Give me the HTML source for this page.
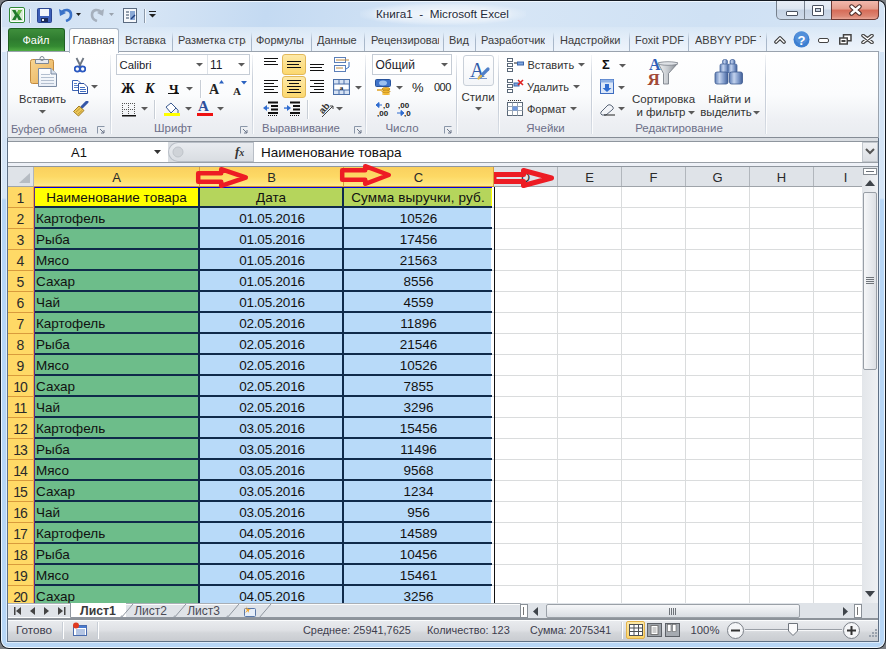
<!DOCTYPE html><html><head><meta charset="utf-8"><style>
*{margin:0;padding:0;box-sizing:border-box}
html,body{width:886px;height:649px;overflow:hidden;background:#7a7d82}
body{position:relative;font-family:"Liberation Sans",sans-serif;}
div{position:absolute}
.t{white-space:pre;line-height:1;}
</style></head><body><div style="left:0px;top:0px;width:886px;height:649px;background:#141a22;border-radius:8px 8px 9px 9px"></div><div style="left:1px;top:1px;width:884px;height:647px;background:#eef6fe;border-radius:7px 7px 8px 8px;"></div><div style="left:2px;top:2px;width:882px;height:645px;background:linear-gradient(#d3e3f5 0px,#d6e6f7 196px,#b7d6f6 198px,#b7d6f6 100%);border-radius:6px 6px 7px 7px;"></div><div style="left:2px;top:2px;width:882px;height:26px;background:linear-gradient(100deg,#cfe0f3 0%,#d8e6f5 15%,#c4daf2 30%,#d7e6f6 55%,#cfe1f4 80%,#d5e4f5 100%);border-radius:6px 6px 0 0;"></div><div style="left:2px;top:27px;width:882px;height:25px;background:linear-gradient(#d8e7f6,#e6eff9 55%,#eef4fb)"></div><div style="left:6px;top:51px;width:874px;height:592px;background:#dcecfc"></div><div style="left:7px;top:51px;width:872px;height:591px;background:#5f7085"></div><svg style="position:absolute;left:9px;top:7px;" width="17" height="17" viewBox="0 0 17 17"><rect x="0.5" y="0.5" width="15" height="15" rx="1.5" fill="#fff" stroke="#2f8a37"/>
<rect x="2" y="2" width="12" height="12" fill="#d8ecd4"/>
<path d="M3 3H6.5L8 6L9.5 3H13L10 8L13 13H9.5L8 10L6.5 13H3L6 8Z" fill="#1f7a2c"/>
<path d="M8 6L9.5 3H13L10 8Z" fill="#6cc04a"/></svg><div style="left:29px;top:9px;width:1px;height:14px;background:#8c9aab"></div><div style="left:30px;top:9px;width:1px;height:14px;background:#f4f8fc"></div><svg style="position:absolute;left:37px;top:8px;" width="15" height="15" viewBox="0 0 15 15"><rect x="0.5" y="0.5" width="14" height="14" rx="1" fill="#3d5fb8" stroke="#2a4590"/>
<rect x="3" y="1" width="9" height="7" fill="#f2f5fa"/>
<rect x="4" y="10" width="7" height="4" fill="#1c2a55"/><rect x="5" y="11" width="2" height="2" fill="#e8eef8"/></svg><svg style="position:absolute;left:59px;top:7px;" width="14" height="15" viewBox="0 0 14 15"><path d="M3 5C6 2 12 2 12 8C12 11 10 13 7 14" stroke="#3a72c8" stroke-width="2.6" fill="none"/>
<path d="M0 2L1 9L7 6Z" fill="#3a72c8"/></svg><svg style="position:absolute;left:76px;top:13px;" width="6" height="4" viewBox="0 0 6 4"><path d="M0 0H5L2.5 3Z" fill="#222"/></svg><svg style="position:absolute;left:90px;top:7px;" width="14" height="15" viewBox="0 0 14 15"><path d="M11 5C8 2 2 2 2 8C2 11 4 13 7 14" stroke="#a6b0bd" stroke-width="2.6" fill="none"/>
<path d="M14 2L13 9L7 6Z" fill="#a6b0bd"/></svg><svg style="position:absolute;left:109px;top:13px;" width="6" height="4" viewBox="0 0 6 4"><path d="M0 0H5L2.5 3Z" fill="#9aa3ae"/></svg><svg style="position:absolute;left:123px;top:8px;" width="15" height="15" viewBox="0 0 15 15"><rect x="0.5" y="0.5" width="13" height="14" fill="#f6f8fb" stroke="#5a6a80"/>
<path d="M3 4H6M3 7H6M3 10H6" stroke="#33465e"/><rect x="7" y="3" width="5" height="9" fill="#8aa9d6"/>
<path d="M8 11L12 7" stroke="#1f3f80" stroke-width="1.4"/></svg><div style="left:144px;top:9px;width:1px;height:14px;background:#8c9aab"></div><div style="left:145px;top:9px;width:1px;height:14px;background:#f4f8fc"></div><div style="left:149px;top:11px;width:7px;height:1px;background:#222"></div><svg style="position:absolute;left:149px;top:14px;" width="7" height="4" viewBox="0 0 7 4"><path d="M0 0H7L3.5 3.5Z" fill="#222"/></svg><div style="left:360px;top:3px;width:166px;height:22px;background:radial-gradient(ellipse at center,rgba(255,255,255,0.75) 0%,rgba(255,255,255,0.35) 55%,rgba(255,255,255,0) 75%)"></div><div class="t" style="left:342.5px;width:200px;text-align:center;top:7.6px;font-size:11.7px;color:#1e2a3a;text-shadow:0 0 6px #fff,0 0 3px #fff">Книга1  -  Microsoft Excel</div><div style="left:776px;top:1px;width:103px;height:19px;background:linear-gradient(#e8eef6 0%,#dde6f1 45%,#c5d3e4 50%,#cfdbea 100%);border:1px solid #76808c;border-top:none;border-radius:0 0 5px 5px"></div><div style="left:831px;top:1px;width:48px;height:19px;background:linear-gradient(#f2b9ad 0%,#e49c8b 45%,#d66b57 50%,#dc8674 85%,#eaa898 100%);border:1px solid #6e3a34;border-top:none;border-radius:0 0 5px 0"></div><div style="left:804px;top:1px;width:1px;height:18px;background:#76808c"></div><div style="left:786px;top:11px;width:12px;height:5px;background:#fff;border:1px solid #4a5260;border-radius:1px"></div><div style="left:812px;top:5px;width:12px;height:11px;background:#fff;border:1px solid #4a5260;border-radius:1px"></div><div style="left:815px;top:8px;width:6px;height:4px;background:#c8d3e0;border:1px solid #4a5260"></div><svg style="position:absolute;left:849px;top:4px;" width="13" height="12" viewBox="0 0 13 12"><path d="M2.5 2.5L10.5 9.5M10.5 2.5L2.5 9.5" stroke="#4a2a26" stroke-width="4.4" stroke-linecap="round"/><path d="M2.5 2.5L10.5 9.5M10.5 2.5L2.5 9.5" stroke="#fff" stroke-width="2.4" stroke-linecap="round"/></svg><div style="left:8px;top:28px;width:57px;height:24px;background:linear-gradient(#3f8f3c 0%,#2e7b2f 45%,#348a32 75%,#56b347 100%);border:1px solid #1f5f22;border-bottom:none;border-radius:3px 3px 0 0"></div><div class="t" style="left:-64px;width:200px;text-align:center;top:35.2px;font-size:11px;color:#fff;">Файл</div><div style="left:69px;top:28px;width:50px;height:25px;background:linear-gradient(#fdfefe,#ffffff);border:1px solid #a9b6c6;border-bottom:none;border-radius:3px 3px 0 0;z-index:3"></div><div class="t" style="left:-6.5px;width:200px;text-align:center;top:35.2px;font-size:11px;color:#3c3c3c;z-index:4">Главная</div><div class="t" style="left:125px;top:35.2px;font-size:11px;color:#3c3c3c;width:45px;overflow:hidden">Вставка</div><div style="left:172px;top:32px;width:1px;height:19px;background:linear-gradient(rgba(160,175,195,0),#a9b8ca 40%,#a9b8ca)"></div><div class="t" style="left:178px;top:35.2px;font-size:11px;color:#3c3c3c;width:68px;overflow:hidden">Разметка страницы</div><div style="left:251px;top:32px;width:1px;height:19px;background:linear-gradient(rgba(160,175,195,0),#a9b8ca 40%,#a9b8ca)"></div><div class="t" style="left:256px;top:35.2px;font-size:11px;color:#3c3c3c;width:53px;overflow:hidden">Формулы</div><div style="left:311px;top:32px;width:1px;height:19px;background:linear-gradient(rgba(160,175,195,0),#a9b8ca 40%,#a9b8ca)"></div><div class="t" style="left:317px;top:35.2px;font-size:11px;color:#3c3c3c;width:45px;overflow:hidden">Данные</div><div style="left:364px;top:32px;width:1px;height:19px;background:linear-gradient(rgba(160,175,195,0),#a9b8ca 40%,#a9b8ca)"></div><div class="t" style="left:371px;top:35.2px;font-size:11px;color:#3c3c3c;width:68px;overflow:hidden">Рецензирование</div><div style="left:443px;top:32px;width:1px;height:19px;background:linear-gradient(rgba(160,175,195,0),#a9b8ca 40%,#a9b8ca)"></div><div class="t" style="left:449px;top:35.2px;font-size:11px;color:#3c3c3c;width:24px;overflow:hidden">Вид</div><div style="left:475px;top:32px;width:1px;height:19px;background:linear-gradient(rgba(160,175,195,0),#a9b8ca 40%,#a9b8ca)"></div><div class="t" style="left:481px;top:35.2px;font-size:11px;color:#3c3c3c;width:64px;overflow:hidden">Разработчик</div><div style="left:553px;top:32px;width:1px;height:19px;background:linear-gradient(rgba(160,175,195,0),#a9b8ca 40%,#a9b8ca)"></div><div class="t" style="left:560px;top:35.2px;font-size:11px;color:#3c3c3c;width:67px;overflow:hidden">Надстройки</div><div style="left:629px;top:32px;width:1px;height:19px;background:linear-gradient(rgba(160,175,195,0),#a9b8ca 40%,#a9b8ca)"></div><div class="t" style="left:635px;top:35.2px;font-size:11px;color:#3c3c3c;width:51px;overflow:hidden">Foxit PDF</div><div style="left:688px;top:32px;width:1px;height:19px;background:linear-gradient(rgba(160,175,195,0),#a9b8ca 40%,#a9b8ca)"></div><div class="t" style="left:695px;top:35.2px;font-size:11px;color:#3c3c3c;width:66px;overflow:hidden">ABBYY PDF Transformer</div><div style="left:766px;top:32px;width:1px;height:19px;background:linear-gradient(rgba(160,175,195,0),#a9b8ca 40%,#a9b8ca)"></div><svg style="position:absolute;left:774px;top:35px;" width="12" height="9" viewBox="0 0 12 9"><path d="M2 7L6 3L10 7" stroke="#3a3a3a" stroke-width="3.6" fill="none" stroke-linejoin="round" stroke-linecap="round"/><path d="M2 7L6 3L10 7" stroke="#fff" stroke-width="1.4" fill="none" stroke-linecap="round"/></svg><svg style="position:absolute;left:793px;top:31px;" width="17" height="17" viewBox="0 0 17 17"><circle cx="8.5" cy="8.5" r="8" fill="#3d7fd1"/><circle cx="8.5" cy="6.5" r="6.5" fill="#5f9ae0" opacity=".6"/><text x="8.5" y="13.5" font-family="Liberation Sans" font-weight="bold" font-size="13" fill="#fff" text-anchor="middle">?</text></svg><div style="left:818px;top:38px;width:11px;height:5px;background:#fff;border:1.5px solid #444;border-radius:2px"></div><svg style="position:absolute;left:839px;top:34px;" width="13" height="11" viewBox="0 0 13 11"><rect x="4.5" y="0.75" width="7.5" height="6" fill="#fff" stroke="#444" stroke-width="1.5"/><rect x="0.75" y="4" width="7.5" height="6" fill="#fff" stroke="#444" stroke-width="1.5"/><rect x="2.5" y="6" width="4" height="2" fill="#444"/></svg><svg style="position:absolute;left:861px;top:34px;" width="13" height="10" viewBox="0 0 13 10"><path d="M2 1.5L11 8.5M11 1.5L2 8.5" stroke="#444" stroke-width="3.6" stroke-linecap="round"/><path d="M2 1.5L11 8.5M11 1.5L2 8.5" stroke="#fff" stroke-width="1.3" stroke-linecap="round"/></svg><div style="left:7px;top:51px;width:872px;height:87px;background:#9aa3ae"></div><div style="left:8px;top:52px;width:870px;height:85px;background:linear-gradient(#ffffff 0%,#fbfcfd 50%,#eef0f4 80%,#e9ecf0 100%)"></div><div style="left:70px;top:51px;width:48px;height:2px;background:#fff;z-index:3"></div><div style="left:110px;top:55px;width:1px;height:79px;background:linear-gradient(rgba(200,208,218,0.2),#c9d0da 30%,#c9d0da 70%,rgba(200,208,218,0.5))"></div><div style="left:111px;top:55px;width:1px;height:79px;background:rgba(255,255,255,0.8)"></div><div style="left:252px;top:55px;width:1px;height:79px;background:linear-gradient(rgba(200,208,218,0.2),#c9d0da 30%,#c9d0da 70%,rgba(200,208,218,0.5))"></div><div style="left:253px;top:55px;width:1px;height:79px;background:rgba(255,255,255,0.8)"></div><div style="left:365px;top:55px;width:1px;height:79px;background:linear-gradient(rgba(200,208,218,0.2),#c9d0da 30%,#c9d0da 70%,rgba(200,208,218,0.5))"></div><div style="left:366px;top:55px;width:1px;height:79px;background:rgba(255,255,255,0.8)"></div><div style="left:456px;top:55px;width:1px;height:79px;background:linear-gradient(rgba(200,208,218,0.2),#c9d0da 30%,#c9d0da 70%,rgba(200,208,218,0.5))"></div><div style="left:457px;top:55px;width:1px;height:79px;background:rgba(255,255,255,0.8)"></div><div style="left:498px;top:55px;width:1px;height:79px;background:linear-gradient(rgba(200,208,218,0.2),#c9d0da 30%,#c9d0da 70%,rgba(200,208,218,0.5))"></div><div style="left:499px;top:55px;width:1px;height:79px;background:rgba(255,255,255,0.8)"></div><div style="left:591px;top:55px;width:1px;height:79px;background:linear-gradient(rgba(200,208,218,0.2),#c9d0da 30%,#c9d0da 70%,rgba(200,208,218,0.5))"></div><div style="left:592px;top:55px;width:1px;height:79px;background:rgba(255,255,255,0.8)"></div><div style="left:765px;top:55px;width:1px;height:79px;background:linear-gradient(rgba(200,208,218,0.2),#c9d0da 30%,#c9d0da 70%,rgba(200,208,218,0.5))"></div><div style="left:766px;top:55px;width:1px;height:79px;background:rgba(255,255,255,0.8)"></div><svg style="position:absolute;left:28px;top:55px;" width="32" height="34" viewBox="0 0 32 34"><defs><linearGradient id="cb" x1="0" y1="0" x2="1" y2="1"><stop offset="0" stop-color="#f7d592"/><stop offset="1" stop-color="#e9b15a"/></linearGradient>
<linearGradient id="pp" x1="0" y1="0" x2="0" y2="1"><stop offset="0" stop-color="#ffffff"/><stop offset="1" stop-color="#e8eef6"/></linearGradient></defs>
<rect x="2.5" y="4.5" width="23" height="24" rx="2" fill="url(#cb)" stroke="#c28a3e"/>
<path d="M7.5 4.5H20.5V8.5H7.5Z" fill="#e6e9ee" stroke="#7d8794"/><circle cx="14" cy="3.5" r="2" fill="none" stroke="#7d8794"/>
<path d="M10.5 13.5H23L28.5 19V31.5H10.5Z" fill="url(#pp)" stroke="#7b8ba3"/>
<path d="M23 13.5V19H28.5" fill="#d7e0ec" stroke="#7b8ba3"/>
<path d="M13 19.5H22M13 22.5H26M13 25.5H26M13 28.5H26" stroke="#b3bfcf"/></svg><div class="t" style="left:-57.5px;width:200px;text-align:center;top:94.1px;font-size:11.1px;color:#333;">Вставить</div><svg style="position:absolute;left:39px;top:110px;" width="7" height="4" viewBox="0 0 7 4"><path d="M0 0H7L3.5 3.5Z" fill="#5a5a5a"/></svg><svg style="position:absolute;left:74px;top:57px;" width="12" height="16" viewBox="0 0 12 16"><path d="M2.5 1L7 10M9.5 1L5 10" stroke="#6d7682" stroke-width="1.8"/>
<circle cx="3.3" cy="12" r="2.6" fill="none" stroke="#2a58c0" stroke-width="1.8"/><circle cx="8.7" cy="12" r="2.6" fill="none" stroke="#2a58c0" stroke-width="1.8"/></svg><svg style="position:absolute;left:71px;top:79px;" width="18" height="15" viewBox="0 0 18 15"><path d="M1.5 1.5H7L9.5 4V11.5H1.5Z" fill="#fff" stroke="#3d64b4"/><path d="M3 4.5H6M3 6.5H8M3 8.5H8" stroke="#5b82c8"/>
<path d="M7.5 4.5H13L16.5 8V14.5H7.5Z" fill="#fff" stroke="#2c4f9e"/><path d="M9 8.5H14M9 10.5H15M9 12.5H15" stroke="#3f6cc0"/></svg><svg style="position:absolute;left:91px;top:85px;" width="7" height="4" viewBox="0 0 7 4"><path d="M0 0H7L3.5 3.5Z" fill="#5a5a5a"/></svg><svg style="position:absolute;left:72px;top:101px;" width="17" height="16" viewBox="0 0 17 16"><path d="M10 6L15 1" stroke="#3557a8" stroke-width="3" stroke-linecap="round"/>
<path d="M1.5 10.5L7 5L12 9.5L6.5 15Z" fill="#ecc758" stroke="#a27d22"/><path d="M4 11L8 7.5M6 13L10 9.5" stroke="#c39a35"/></svg><div class="t" style="left:-51px;width:200px;text-align:center;top:123.5px;font-size:11.2px;color:#6c6e88;">Буфер обмена</div><svg style="position:absolute;left:97px;top:126px;" width="8" height="8" viewBox="0 0 8 8"><path d="M0.5 7.5V0.5H7.5" stroke="#8a96a8" fill="none"/><path d="M3 3L7 7M7 4V7H4" stroke="#6a7588" fill="none"/></svg><div style="left:116px;top:54px;width:134px;height:21px;background:#fff;border:1px solid #c5ccd5"></div><div style="left:207px;top:55px;width:1px;height:19px;background:#dde2e8"></div><div class="t" style="left:119.5px;top:59.9px;font-size:11.3px;color:#1a1a2a;">Calibri</div><svg style="position:absolute;left:196px;top:63px;" width="7" height="4" viewBox="0 0 7 4"><path d="M0 0H7L3.5 3.5Z" fill="#5a5a5a"/></svg><div class="t" style="left:210px;top:59.3px;font-size:12px;color:#1a1a2a;">11</div><svg style="position:absolute;left:238px;top:63px;" width="7" height="4" viewBox="0 0 7 4"><path d="M0 0H7L3.5 3.5Z" fill="#5a5a5a"/></svg><div class="t" style="left:121px;top:82.1px;font-size:14px;color:#111;font-family:'Liberation Serif',serif;font-weight:bold">Ж</div><div class="t" style="left:145px;top:82.1px;font-size:14px;color:#111;font-family:'Liberation Serif',serif;font-weight:bold;font-style:italic">К</div><div class="t" style="left:169px;top:81.5px;font-size:13px;color:#111;font-family:'Liberation Serif',serif;font-weight:bold">Ч</div><div style="left:168px;top:93px;width:11px;height:1px;background:#111"></div><svg style="position:absolute;left:186px;top:87px;" width="7" height="4" viewBox="0 0 7 4"><path d="M0 0H7L3.5 3.5Z" fill="#5a5a5a"/></svg><div style="left:200px;top:80px;width:1px;height:18px;background:#c8ced6"></div><div style="left:201px;top:80px;width:1px;height:18px;background:#fff"></div><div class="t" style="left:209px;top:83.1px;font-size:14px;color:#222;font-family:'Liberation Serif',serif;font-weight:bold">A</div><svg style="position:absolute;left:219px;top:80px;" width="5" height="4" viewBox="0 0 5 4"><path d="M0 3.5L2.5 0L5 3.5Z" fill="#2b62c0"/></svg><div class="t" style="left:233px;top:85.7px;font-size:11px;color:#222;font-family:'Liberation Serif',serif;font-weight:bold">A</div><svg style="position:absolute;left:241px;top:81px;" width="6" height="4" viewBox="0 0 6 4"><path d="M0 0H6L3 3.5Z" fill="#2b62c0"/></svg><svg style="position:absolute;left:122px;top:103px;" width="14" height="14" viewBox="0 0 14 14"><g fill="#555"><rect x="0" y="0" width="1" height="1"/><rect x="0" y="0" width="1" height="1"/><rect x="0" y="6" width="1" height="1"/><rect x="6" y="0" width="1" height="1"/><rect x="0" y="12" width="1" height="1"/><rect x="12" y="0" width="1" height="1"/><rect x="2" y="0" width="1" height="1"/><rect x="0" y="2" width="1" height="1"/><rect x="2" y="6" width="1" height="1"/><rect x="6" y="2" width="1" height="1"/><rect x="2" y="12" width="1" height="1"/><rect x="12" y="2" width="1" height="1"/><rect x="4" y="0" width="1" height="1"/><rect x="0" y="4" width="1" height="1"/><rect x="4" y="6" width="1" height="1"/><rect x="6" y="4" width="1" height="1"/><rect x="4" y="12" width="1" height="1"/><rect x="12" y="4" width="1" height="1"/><rect x="6" y="0" width="1" height="1"/><rect x="0" y="6" width="1" height="1"/><rect x="6" y="6" width="1" height="1"/><rect x="6" y="6" width="1" height="1"/><rect x="6" y="12" width="1" height="1"/><rect x="12" y="6" width="1" height="1"/><rect x="8" y="0" width="1" height="1"/><rect x="0" y="8" width="1" height="1"/><rect x="8" y="6" width="1" height="1"/><rect x="6" y="8" width="1" height="1"/><rect x="8" y="12" width="1" height="1"/><rect x="12" y="8" width="1" height="1"/><rect x="10" y="0" width="1" height="1"/><rect x="0" y="10" width="1" height="1"/><rect x="10" y="6" width="1" height="1"/><rect x="6" y="10" width="1" height="1"/><rect x="10" y="12" width="1" height="1"/><rect x="12" y="10" width="1" height="1"/><rect x="12" y="0" width="1" height="1"/><rect x="0" y="12" width="1" height="1"/><rect x="12" y="6" width="1" height="1"/><rect x="6" y="12" width="1" height="1"/><rect x="12" y="12" width="1" height="1"/><rect x="12" y="12" width="1" height="1"/></g><rect x="0" y="12" width="14" height="1.5" fill="#111"/></svg><svg style="position:absolute;left:141px;top:107px;" width="7" height="4" viewBox="0 0 7 4"><path d="M0 0H7L3.5 3.5Z" fill="#5a5a5a"/></svg><div style="left:154px;top:100px;width:1px;height:19px;background:#c8ced6"></div><div style="left:155px;top:100px;width:1px;height:19px;background:#fff"></div><svg style="position:absolute;left:163px;top:101px;" width="18" height="17" viewBox="0 0 18 17"><path d="M3 6L8 2L13 7L8 12Z" fill="#fff" stroke="#3a5a90"/><path d="M13 7Q16 9 15 12" stroke="#3a5a90" fill="none"/>
<rect x="1" y="12" width="16" height="3" fill="#ffff00"/></svg><svg style="position:absolute;left:185px;top:107px;" width="7" height="4" viewBox="0 0 7 4"><path d="M0 0H7L3.5 3.5Z" fill="#5a5a5a"/></svg><div class="t" style="left:198px;top:99.3px;font-size:15px;color:#2b4f9c;font-family:'Liberation Serif',serif;font-weight:bold">A</div><div style="left:197px;top:113px;width:16px;height:3px;background:#ee1111"></div><svg style="position:absolute;left:217px;top:107px;" width="7" height="4" viewBox="0 0 7 4"><path d="M0 0H7L3.5 3.5Z" fill="#5a5a5a"/></svg><div class="t" style="left:73px;width:200px;text-align:center;top:123.3px;font-size:11.5px;color:#6c6e88;">Шрифт</div><svg style="position:absolute;left:240px;top:126px;" width="8" height="8" viewBox="0 0 8 8"><path d="M0.5 7.5V0.5H7.5" stroke="#8a96a8" fill="none"/><path d="M3 3L7 7M7 4V7H4" stroke="#6a7588" fill="none"/></svg><svg style="position:absolute;left:263px;top:57px;" width="16" height="10" viewBox="0 0 16 10"><rect x="1" y="1" width="14" height="1" fill="#111"/><rect x="1" y="4" width="12" height="1" fill="#111"/><rect x="1" y="7" width="14" height="1" fill="#111"/></svg><div style="left:282px;top:54px;width:24px;height:21px;background:linear-gradient(#fde9a8,#fcd86f);border:1px solid #e2b95a;border-radius:3px"></div><div style="left:282px;top:76px;width:24px;height:22px;background:linear-gradient(#fde9a8,#fcd86f);border:1px solid #e2b95a;border-radius:3px"></div><svg style="position:absolute;left:286px;top:60px;" width="16" height="10" viewBox="0 0 16 10"><rect x="1" y="1" width="14" height="1" fill="#111"/><rect x="1" y="4" width="12" height="1" fill="#111"/><rect x="1" y="7" width="14" height="1" fill="#111"/></svg><svg style="position:absolute;left:309px;top:63px;" width="16" height="10" viewBox="0 0 16 10"><rect x="1" y="1" width="14" height="1" fill="#111"/><rect x="1" y="4" width="12" height="1" fill="#111"/><rect x="1" y="7" width="14" height="1" fill="#111"/></svg><svg style="position:absolute;left:263px;top:80px;" width="16" height="14" viewBox="0 0 16 14"><rect x="1" y="0" width="14" height="1" fill="#111"/><rect x="1" y="3" width="10" height="1" fill="#111"/><rect x="1" y="6" width="14" height="1" fill="#111"/><rect x="1" y="9" width="10" height="1" fill="#111"/><rect x="1" y="12" width="14" height="1" fill="#111"/></svg><svg style="position:absolute;left:286px;top:80px;" width="16" height="14" viewBox="0 0 16 14"><rect x="1" y="0" width="14" height="1" fill="#111"/><rect x="3" y="3" width="10" height="1" fill="#111"/><rect x="1" y="6" width="14" height="1" fill="#111"/><rect x="3" y="9" width="10" height="1" fill="#111"/><rect x="1" y="12" width="14" height="1" fill="#111"/></svg><svg style="position:absolute;left:309px;top:80px;" width="16" height="14" viewBox="0 0 16 14"><rect x="1" y="0" width="14" height="1" fill="#111"/><rect x="5" y="3" width="10" height="1" fill="#111"/><rect x="1" y="6" width="14" height="1" fill="#111"/><rect x="5" y="9" width="10" height="1" fill="#111"/><rect x="1" y="12" width="14" height="1" fill="#111"/></svg><svg style="position:absolute;left:333px;top:56px;" width="18" height="17" viewBox="0 0 18 17"><rect x="1.5" y="1.5" width="11" height="5" fill="#fff" stroke="#5b7fb8"/><path d="M3 4H16" stroke="#c08a40"/>
<rect x="1.5" y="9.5" width="11" height="6" fill="#fff" stroke="#5b7fb8"/><path d="M3 12H10" stroke="#c08a40"/><path d="M16 6V11L13 13" stroke="#3a70c0" fill="none"/></svg><svg style="position:absolute;left:333px;top:79px;" width="18" height="16" viewBox="0 0 18 16"><rect x="0.5" y="0.5" width="16" height="15" fill="#d6e2f3" stroke="#4a6fa8"/><rect x="2" y="5" width="13" height="6" fill="#fff"/>
<path d="M0 5H17M0 11H17M6 0V5M11 0V5M6 11V16M11 11V16" stroke="#4a6fa8"/><text x="8.5" y="10.5" font-size="7" font-family="Liberation Serif" font-weight="bold" text-anchor="middle" fill="#222">a</text></svg><svg style="position:absolute;left:355px;top:86px;" width="7" height="4" viewBox="0 0 7 4"><path d="M0 0H7L3.5 3.5Z" fill="#5a5a5a"/></svg><svg style="position:absolute;left:262px;top:101px;" width="18" height="16" viewBox="0 0 18 16"><path d="M6 1.5H16M9 5H16M9 8.5H16M6 12H16" stroke="#111" stroke-width="2"/><path d="M6 14.5H16" stroke="#111" stroke-dasharray="1 1"/><path d="M1 7L5 4V10Z" fill="#2f6cd0"/><rect x="3" y="6.4" width="4" height="1.3" fill="#2f6cd0"/></svg><svg style="position:absolute;left:284px;top:101px;" width="18" height="16" viewBox="0 0 18 16"><path d="M6 1.5H16M9 5H16M9 8.5H16M6 12H16" stroke="#111" stroke-width="2"/><path d="M6 14.5H16" stroke="#111" stroke-dasharray="1 1"/><path d="M7 7L3 4V10Z" fill="#2f6cd0"/><rect x="0" y="6.4" width="4" height="1.3" fill="#2f6cd0"/></svg><div style="left:307px;top:100px;width:1px;height:19px;background:#c8ced6"></div><div style="left:308px;top:100px;width:1px;height:19px;background:#fff"></div><svg style="position:absolute;left:317px;top:100px;" width="20" height="18" viewBox="0 0 20 18"><text x="0" y="3.5" font-size="9.5" font-family="Liberation Sans" font-weight="bold" fill="#333" text-anchor="middle" transform="translate(7 8) rotate(-50)">ab</text><path d="M5 17L16 6M13 6H16V9" stroke="#444" fill="none"/></svg><svg style="position:absolute;left:336px;top:107px;" width="7" height="4" viewBox="0 0 7 4"><path d="M0 0H7L3.5 3.5Z" fill="#5a5a5a"/></svg><div class="t" style="left:201px;width:200px;text-align:center;top:123.4px;font-size:11.3px;color:#6c6e88;">Выравнивание</div><svg style="position:absolute;left:354px;top:126px;" width="8" height="8" viewBox="0 0 8 8"><path d="M0.5 7.5V0.5H7.5" stroke="#8a96a8" fill="none"/><path d="M3 3L7 7M7 4V7H4" stroke="#6a7588" fill="none"/></svg><div style="left:372px;top:54px;width:80px;height:21px;background:#fff;border:1px solid #c5ccd5"></div><div class="t" style="left:375.5px;top:59.3px;font-size:12px;color:#1a1a2a;">Общий</div><svg style="position:absolute;left:441px;top:63px;" width="7" height="4" viewBox="0 0 7 4"><path d="M0 0H7L3.5 3.5Z" fill="#5a5a5a"/></svg><svg style="position:absolute;left:375px;top:79px;" width="17" height="16" viewBox="0 0 17 16"><rect x="0.5" y="0.5" width="15" height="7" rx="1" fill="#3f73c9" stroke="#27529a"/><ellipse cx="8" cy="4" rx="4" ry="2.5" fill="#9cc0ef"/>
<ellipse cx="11" cy="10" rx="4" ry="1.5" fill="#f0b630" stroke="#b27c10" stroke-width=".7"/><ellipse cx="11" cy="12.5" rx="4" ry="1.5" fill="#f0b630" stroke="#b27c10" stroke-width=".7"/><ellipse cx="11" cy="15" rx="4" ry="1" fill="#f0b630"/><path d="M2 11H7" stroke="#e0a020" stroke-width="1.5"/></svg><svg style="position:absolute;left:396px;top:86px;" width="7" height="4" viewBox="0 0 7 4"><path d="M0 0H7L3.5 3.5Z" fill="#5a5a5a"/></svg><div class="t" style="left:412px;top:81.0px;font-size:13px;color:#222;">%</div><div class="t" style="left:434px;top:82.2px;font-size:11px;color:#222;letter-spacing:-0.5px">000</div><svg style="position:absolute;left:375px;top:101px;" width="18" height="16" viewBox="0 0 18 16"><path d="M1 4L4 1.5V6.5Z M3 4H7" fill="#2f6cd0" stroke="#2f6cd0"/><text x="8" y="7" font-size="8" font-family="Liberation Sans" font-weight="bold" fill="#222">,0</text><text x="2" y="15" font-size="8" font-family="Liberation Sans" font-weight="bold" fill="#222">,00</text></svg><svg style="position:absolute;left:396px;top:101px;" width="18" height="16" viewBox="0 0 18 16"><text x="2" y="7" font-size="8" font-family="Liberation Sans" font-weight="bold" fill="#222">,00</text><path d="M1 12H6M8 12L5 9.5V14.5Z" fill="#2f6cd0" stroke="#2f6cd0"/><text x="8" y="15" font-size="8" font-family="Liberation Sans" font-weight="bold" fill="#222">,0</text></svg><div class="t" style="left:302px;width:200px;text-align:center;top:123.3px;font-size:11.5px;color:#6c6e88;">Число</div><svg style="position:absolute;left:444px;top:126px;" width="8" height="8" viewBox="0 0 8 8"><path d="M0.5 7.5V0.5H7.5" stroke="#8a96a8" fill="none"/><path d="M3 3L7 7M7 4V7H4" stroke="#6a7588" fill="none"/></svg><div style="left:463px;top:55px;width:31px;height:31px;background:linear-gradient(#ffffff,#f3f5f8);border:1px solid #c9d0d9;border-radius:3px"></div><svg style="position:absolute;left:466px;top:58px;" width="26" height="25" viewBox="0 0 26 25"><text x="4" y="19" font-size="20" font-family="Liberation Serif" fill="#2f5aa8">A</text><path d="M3 20.5H21" stroke="#7a9ad0" stroke-width="1"/>
<path d="M14 19L22 11" stroke="#4f7fc8" stroke-width="3.2" stroke-linecap="round"/><path d="M12.5 20.5L15 18" stroke="#e2b84a" stroke-width="2.4" stroke-linecap="round"/></svg><div class="t" style="left:378px;width:200px;text-align:center;top:92.3px;font-size:11.5px;color:#333;">Стили</div><svg style="position:absolute;left:475px;top:107px;" width="7" height="4" viewBox="0 0 7 4"><path d="M0 0H7L3.5 3.5Z" fill="#5a5a5a"/></svg><svg style="position:absolute;left:507px;top:58px;" width="17" height="14" viewBox="0 0 17 14"><rect x="0.5" y="0.5" width="5" height="3" fill="#fff" stroke="#5a6878"/><rect x="0.5" y="5.5" width="5" height="3" fill="#fff" stroke="#5a6878"/><rect x="0.5" y="10.5" width="5" height="3" fill="#fff" stroke="#5a6878"/><path d="M7 5H10" stroke="#222"/><rect x="10.5" y="4" width="6" height="3" fill="#7fa7e0" stroke="#3a64a8"/></svg><div class="t" style="left:527.5px;top:60.2px;font-size:11px;color:#333;">Вставить</div><svg style="position:absolute;left:578px;top:63px;" width="7" height="4" viewBox="0 0 7 4"><path d="M0 0H7L3.5 3.5Z" fill="#5a5a5a"/></svg><svg style="position:absolute;left:507px;top:79px;" width="17" height="14" viewBox="0 0 17 14"><rect x="0.5" y="0.5" width="5" height="3" fill="#fff" stroke="#5a6878"/><rect x="0.5" y="5.5" width="5" height="3" fill="#fff" stroke="#5a6878"/><rect x="0.5" y="10.5" width="5" height="3" fill="#fff" stroke="#5a6878"/><rect x="7" y="4" width="5" height="3" fill="#7fa7e0" stroke="#3a64a8"/><path d="M11 1L16 6M16 1L11 6" stroke="#e02020" stroke-width="1.6"/></svg><div class="t" style="left:527px;top:82.2px;font-size:11px;color:#333;">Удалить</div><svg style="position:absolute;left:573px;top:85px;" width="7" height="4" viewBox="0 0 7 4"><path d="M0 0H7L3.5 3.5Z" fill="#5a5a5a"/></svg><svg style="position:absolute;left:507px;top:100px;" width="17" height="17" viewBox="0 0 17 17"><rect x="0.5" y="2.5" width="15" height="13" fill="#fff" stroke="#5a6878"/><path d="M0.5 6.5H15.5M0.5 10.5H15.5M5.5 2.5V15.5M10.5 2.5V15.5" stroke="#9aa6b4"/><rect x="5.5" y="6.5" width="5" height="4" fill="#6f98de"/><path d="M1 0.5H15" stroke="#333" stroke-dasharray="1 1"/></svg><div class="t" style="left:527px;top:104.2px;font-size:11px;color:#333;">Формат</div><svg style="position:absolute;left:570px;top:107px;" width="7" height="4" viewBox="0 0 7 4"><path d="M0 0H7L3.5 3.5Z" fill="#5a5a5a"/></svg><div class="t" style="left:445.5px;width:200px;text-align:center;top:123.3px;font-size:11.5px;color:#6c6e88;">Ячейки</div><div class="t" style="left:602px;top:58.0px;font-size:13px;color:#111;font-weight:bold">Σ</div><svg style="position:absolute;left:619px;top:64px;" width="7" height="4" viewBox="0 0 7 4"><path d="M0 0H7L3.5 3.5Z" fill="#5a5a5a"/></svg><svg style="position:absolute;left:600px;top:79px;" width="14" height="15" viewBox="0 0 14 15"><rect x="0.5" y="0.5" width="13" height="14" fill="#dbe7f8" stroke="#3d6cc0"/><rect x="0.5" y="0.5" width="13" height="3" fill="#8eb0e4"/><path d="M5 5H9V9H11.5L7 13L2.5 9H5Z" fill="#2f6cd0"/></svg><svg style="position:absolute;left:618px;top:86px;" width="7" height="4" viewBox="0 0 7 4"><path d="M0 0H7L3.5 3.5Z" fill="#5a5a5a"/></svg><svg style="position:absolute;left:600px;top:103px;" width="16" height="13" viewBox="0 0 16 13"><path d="M1 9L8 2Q10 1 12 3L13 4Q14 6 12 7L6 12H2Q0 11 1 9Z" fill="#f2f4f8" stroke="#5a6678"/><path d="M4 12H15" stroke="#222"/></svg><svg style="position:absolute;left:618px;top:107px;" width="7" height="4" viewBox="0 0 7 4"><path d="M0 0H7L3.5 3.5Z" fill="#5a5a5a"/></svg><svg style="position:absolute;left:645px;top:55px;" width="36" height="33" viewBox="0 0 36 33"><defs><linearGradient id="fn" x1="0" y1="0" x2="1" y2="0"><stop offset="0" stop-color="#f4f5f6"/><stop offset=".5" stop-color="#c4c8cd"/><stop offset="1" stop-color="#7d838b"/></linearGradient></defs>
<path d="M13 8H33L23.5 18.5V29H18.5V18.5Z" fill="url(#fn)" stroke="#6f757d" stroke-width=".8"/>
<ellipse cx="23" cy="8.5" rx="10" ry="1.8" fill="#dfe2e6" stroke="#70767e" stroke-width=".7"/>
<text x="4" y="15" font-size="16" font-family="Liberation Serif" font-weight="bold" fill="#3160b8">A</text>
<text x="2.5" y="30" font-size="17" font-family="Liberation Serif" font-weight="bold" fill="#a24a36">Я</text></svg><div class="t" style="left:563.5px;width:200px;text-align:center;top:93.8px;font-size:11.5px;color:#333;">Сортировка</div><div class="t" style="left:561px;width:200px;text-align:center;top:106.8px;font-size:11.5px;color:#333;">и фильтр</div><svg style="position:absolute;left:688px;top:111px;" width="7" height="4" viewBox="0 0 7 4"><path d="M0 0H7L3.5 3.5Z" fill="#5a5a5a"/></svg><svg style="position:absolute;left:714px;top:59px;" width="30" height="26" viewBox="0 0 30 26"><defs><linearGradient id="bn" x1="0" y1="0" x2="1" y2="0"><stop offset="0" stop-color="#5f7fb6"/><stop offset=".35" stop-color="#c3d3ee"/><stop offset=".7" stop-color="#7d98c8"/><stop offset="1" stop-color="#3f5d96"/></linearGradient></defs>
<rect x="8.5" y="0.5" width="5" height="5" rx="2" fill="url(#bn)" stroke="#4d6aa0" stroke-width=".8"/><rect x="16" y="0.5" width="5" height="5" rx="2" fill="url(#bn)" stroke="#4d6aa0" stroke-width=".8"/>
<rect x="6" y="5" width="9" height="9" rx="1.5" fill="url(#bn)" stroke="#4d6aa0" stroke-width=".8"/><rect x="14" y="5" width="9" height="9" rx="1.5" fill="url(#bn)" stroke="#4d6aa0" stroke-width=".8"/>
<rect x="1" y="13" width="13" height="12" rx="2" fill="url(#bn)" stroke="#3d5a90" stroke-width=".8"/><rect x="15.5" y="13" width="13" height="12" rx="2" fill="url(#bn)" stroke="#3d5a90" stroke-width=".8"/></svg><div class="t" style="left:629.5px;width:200px;text-align:center;top:93.8px;font-size:11.5px;color:#333;">Найти и</div><div class="t" style="left:626px;width:200px;text-align:center;top:106.8px;font-size:11.5px;color:#333;">выделить</div><svg style="position:absolute;left:753px;top:111px;" width="7" height="4" viewBox="0 0 7 4"><path d="M0 0H7L3.5 3.5Z" fill="#5a5a5a"/></svg><div class="t" style="left:579px;width:200px;text-align:center;top:123.3px;font-size:11.5px;color:#6c6e88;">Редактирование</div><div style="left:8px;top:137px;width:870px;height:30px;background:#d9dde2"></div><div style="left:8px;top:137px;width:870px;height:1px;background:#858c95"></div><div style="left:8px;top:141px;width:870px;height:1px;background:#8f969e"></div><div style="left:8px;top:162px;width:870px;height:1px;background:#9aa0a7"></div><div style="left:8px;top:163px;width:870px;height:3px;background:#eef1f7"></div><div style="left:8px;top:166px;width:870px;height:1px;background:#8f969e"></div><div style="left:8px;top:142px;width:160px;height:20px;background:#fff"></div><div class="t" style="left:71px;top:146.0px;font-size:13px;color:#111;">A1</div><svg style="position:absolute;left:154px;top:150px;" width="8" height="5" viewBox="0 0 8 5"><path d="M0 0H7L3.5 4Z" fill="#333"/></svg><div style="left:168px;top:142px;width:85px;height:20px;background:linear-gradient(#e9ecf0,#d9dde2);border:1px solid #b8bec6;border-right:none;border-radius:10px 0 0 10px"></div><svg style="position:absolute;left:171px;top:145px;" width="14" height="14" viewBox="0 0 14 14"><circle cx="7" cy="7" r="5" fill="#cfd3d8" stroke="#bfc4ca"/></svg><div class="t" style="left:235px;top:145.0px;font-size:13px;color:#333;font-family:'Liberation Serif',serif;font-weight:bold"><i>f</i><span style='font-size:10px'><i>x</i></span></div><div style="left:253px;top:142px;width:609px;height:20px;background:#fff;border-left:1px solid #b8bec6"></div><div class="t" style="left:261px;top:145.9px;font-size:13.5px;color:#111;">Наименование товара</div><div style="left:862px;top:142px;width:16px;height:20px;background:linear-gradient(#eef0f3,#dcdfe4);border:1px solid #c2c7cd"></div><svg style="position:absolute;left:865px;top:148px;" width="10" height="8" viewBox="0 0 10 8"><path d="M1 1L5 5L9 1" stroke="#555" stroke-width="2" fill="none"/></svg><div style="left:8px;top:167px;width:854px;height:437px;background:#fff"></div><div style="left:8px;top:167px;width:854px;height:19px;background:linear-gradient(#f3f4f6,#dfe3e8)"></div><div style="left:8px;top:186px;width:854px;height:1px;background:#9fa4aa"></div><div style="left:8px;top:167px;width:25px;height:19px;background:#dfe3e8"></div><svg style="position:absolute;left:17px;top:172px;" width="14" height="12" viewBox="0 0 14 12"><path d="M13 1V11H2Z" fill="#b6bcc3"/></svg><div style="left:34px;top:167px;width:165px;height:19px;background:linear-gradient(#fad05e,#fdd965 50%,#fee47c 85%,#ffeb8e)"></div><div class="t" style="left:16.5px;width:200px;text-align:center;top:170.5px;font-size:13px;color:#2a2a2a;">A</div><div style="left:200px;top:167px;width:143px;height:19px;background:linear-gradient(#fad05e,#fdd965 50%,#fee47c 85%,#ffeb8e)"></div><div class="t" style="left:171.5px;width:200px;text-align:center;top:170.5px;font-size:13px;color:#2a2a2a;">B</div><div style="left:344px;top:167px;width:149px;height:19px;background:linear-gradient(#fad05e,#fdd965 50%,#fee47c 85%,#ffeb8e)"></div><div class="t" style="left:318.5px;width:200px;text-align:center;top:170.5px;font-size:13px;color:#2a2a2a;">C</div><div style="left:494px;top:167px;width:63px;height:19px;background:#dfe3e8"></div><div class="t" style="left:425.5px;width:200px;text-align:center;top:170.5px;font-size:13px;color:#2a2a2a;">D</div><div style="left:558px;top:167px;width:63px;height:19px;background:#dfe3e8"></div><div class="t" style="left:489.5px;width:200px;text-align:center;top:170.5px;font-size:13px;color:#2a2a2a;">E</div><div style="left:622px;top:167px;width:63px;height:19px;background:#dfe3e8"></div><div class="t" style="left:553.5px;width:200px;text-align:center;top:170.5px;font-size:13px;color:#2a2a2a;">F</div><div style="left:686px;top:167px;width:63px;height:19px;background:#dfe3e8"></div><div class="t" style="left:617.5px;width:200px;text-align:center;top:170.5px;font-size:13px;color:#2a2a2a;">G</div><div style="left:750px;top:167px;width:63px;height:19px;background:#dfe3e8"></div><div class="t" style="left:681.5px;width:200px;text-align:center;top:170.5px;font-size:13px;color:#2a2a2a;">H</div><div style="left:814px;top:167px;width:63px;height:19px;background:#dfe3e8"></div><div class="t" style="left:745.5px;width:200px;text-align:center;top:170.5px;font-size:13px;color:#2a2a2a;">I</div><div style="left:199px;top:167px;width:1px;height:19px;background:#d79e3e"></div><div style="left:343px;top:167px;width:1px;height:19px;background:#d79e3e"></div><div style="left:493px;top:167px;width:1px;height:19px;background:#d79e3e"></div><div style="left:557px;top:167px;width:1px;height:19px;background:#b1b6bc"></div><div style="left:621px;top:167px;width:1px;height:19px;background:#b1b6bc"></div><div style="left:685px;top:167px;width:1px;height:19px;background:#b1b6bc"></div><div style="left:749px;top:167px;width:1px;height:19px;background:#b1b6bc"></div><div style="left:813px;top:167px;width:1px;height:19px;background:#b1b6bc"></div><div style="left:877px;top:167px;width:1px;height:19px;background:#b1b6bc"></div><div style="left:33px;top:167px;width:1px;height:19px;background:#b1b6bc"></div><div style="left:34px;top:186px;width:460px;height:1px;background:#cf8f3e"></div><div style="left:8px;top:187px;width:25px;height:417px;background:#ffd966"></div><div style="left:8px;top:207px;width:25px;height:1px;background:#d99b3c"></div><div style="left:8px;top:228px;width:25px;height:1px;background:#d99b3c"></div><div style="left:8px;top:249px;width:25px;height:1px;background:#d99b3c"></div><div style="left:8px;top:270px;width:25px;height:1px;background:#d99b3c"></div><div style="left:8px;top:291px;width:25px;height:1px;background:#d99b3c"></div><div style="left:8px;top:312px;width:25px;height:1px;background:#d99b3c"></div><div style="left:8px;top:333px;width:25px;height:1px;background:#d99b3c"></div><div style="left:8px;top:354px;width:25px;height:1px;background:#d99b3c"></div><div style="left:8px;top:375px;width:25px;height:1px;background:#d99b3c"></div><div style="left:8px;top:396px;width:25px;height:1px;background:#d99b3c"></div><div style="left:8px;top:417px;width:25px;height:1px;background:#d99b3c"></div><div style="left:8px;top:438px;width:25px;height:1px;background:#d99b3c"></div><div style="left:8px;top:459px;width:25px;height:1px;background:#d99b3c"></div><div style="left:8px;top:480px;width:25px;height:1px;background:#d99b3c"></div><div style="left:8px;top:501px;width:25px;height:1px;background:#d99b3c"></div><div style="left:8px;top:522px;width:25px;height:1px;background:#d99b3c"></div><div style="left:8px;top:543px;width:25px;height:1px;background:#d99b3c"></div><div style="left:8px;top:564px;width:25px;height:1px;background:#d99b3c"></div><div style="left:8px;top:585px;width:25px;height:1px;background:#d99b3c"></div><div style="left:33px;top:187px;width:1px;height:417px;background:#f2a73f"></div><div style="left:34px;top:207px;width:828px;height:1px;background:#dadcdd"></div><div style="left:34px;top:228px;width:828px;height:1px;background:#dadcdd"></div><div style="left:34px;top:249px;width:828px;height:1px;background:#dadcdd"></div><div style="left:34px;top:270px;width:828px;height:1px;background:#dadcdd"></div><div style="left:34px;top:291px;width:828px;height:1px;background:#dadcdd"></div><div style="left:34px;top:312px;width:828px;height:1px;background:#dadcdd"></div><div style="left:34px;top:333px;width:828px;height:1px;background:#dadcdd"></div><div style="left:34px;top:354px;width:828px;height:1px;background:#dadcdd"></div><div style="left:34px;top:375px;width:828px;height:1px;background:#dadcdd"></div><div style="left:34px;top:396px;width:828px;height:1px;background:#dadcdd"></div><div style="left:34px;top:417px;width:828px;height:1px;background:#dadcdd"></div><div style="left:34px;top:438px;width:828px;height:1px;background:#dadcdd"></div><div style="left:34px;top:459px;width:828px;height:1px;background:#dadcdd"></div><div style="left:34px;top:480px;width:828px;height:1px;background:#dadcdd"></div><div style="left:34px;top:501px;width:828px;height:1px;background:#dadcdd"></div><div style="left:34px;top:522px;width:828px;height:1px;background:#dadcdd"></div><div style="left:34px;top:543px;width:828px;height:1px;background:#dadcdd"></div><div style="left:34px;top:564px;width:828px;height:1px;background:#dadcdd"></div><div style="left:34px;top:585px;width:828px;height:1px;background:#dadcdd"></div><div style="left:34px;top:606px;width:828px;height:1px;background:#dadcdd"></div><div style="left:557px;top:187px;width:1px;height:417px;background:#dadcdd"></div><div style="left:621px;top:187px;width:1px;height:417px;background:#dadcdd"></div><div style="left:685px;top:187px;width:1px;height:417px;background:#dadcdd"></div><div style="left:749px;top:187px;width:1px;height:417px;background:#dadcdd"></div><div style="left:813px;top:187px;width:1px;height:417px;background:#dadcdd"></div><div style="left:34px;top:187px;width:166px;height:20px;background:#ffff00"></div><div style="left:200px;top:187px;width:291px;height:20px;background:#b5d55c"></div><div style="left:491px;top:188px;width:1px;height:18px;background:#ffff00"></div><div style="left:34px;top:207px;width:166px;height:397px;background:#6dbd8a"></div><div style="left:200px;top:207px;width:291px;height:397px;background:#b8daf9"></div><div style="left:34px;top:206px;width:458px;height:2px;background:#0f2a4a"></div><div style="left:34px;top:227px;width:458px;height:2px;background:#0f2a4a"></div><div style="left:34px;top:248px;width:458px;height:2px;background:#0f2a4a"></div><div style="left:34px;top:269px;width:458px;height:2px;background:#0f2a4a"></div><div style="left:34px;top:290px;width:458px;height:2px;background:#0f2a4a"></div><div style="left:34px;top:311px;width:458px;height:2px;background:#0f2a4a"></div><div style="left:34px;top:332px;width:458px;height:2px;background:#0f2a4a"></div><div style="left:34px;top:353px;width:458px;height:2px;background:#0f2a4a"></div><div style="left:34px;top:374px;width:458px;height:2px;background:#0f2a4a"></div><div style="left:34px;top:395px;width:458px;height:2px;background:#0f2a4a"></div><div style="left:34px;top:416px;width:458px;height:2px;background:#0f2a4a"></div><div style="left:34px;top:437px;width:458px;height:2px;background:#0f2a4a"></div><div style="left:34px;top:458px;width:458px;height:2px;background:#0f2a4a"></div><div style="left:34px;top:479px;width:458px;height:2px;background:#0f2a4a"></div><div style="left:34px;top:500px;width:458px;height:2px;background:#0f2a4a"></div><div style="left:34px;top:521px;width:458px;height:2px;background:#0f2a4a"></div><div style="left:34px;top:542px;width:458px;height:2px;background:#0f2a4a"></div><div style="left:34px;top:563px;width:458px;height:2px;background:#0f2a4a"></div><div style="left:34px;top:584px;width:458px;height:2px;background:#0f2a4a"></div><div style="left:34px;top:605px;width:458px;height:2px;background:#0f2a4a"></div><div style="left:34px;top:187px;width:458px;height:1px;background:#0000e0"></div><div style="left:34px;top:187px;width:1px;height:417px;background:#5b2e8a"></div><div style="left:198px;top:187px;width:2px;height:417px;background:#0f2a4a"></div><div style="left:342px;top:187px;width:2px;height:417px;background:#0f2a4a"></div><div style="left:494px;top:187px;width:1px;height:417px;background:#111"></div><div class="t" style="left:-79.5px;width:200px;text-align:center;top:190.9px;font-size:14px;color:#2a2a2a;">1</div><div class="t" style="left:16.5px;width:200px;text-align:center;top:191.1px;font-size:13.5px;color:#111;">Наименование товара</div><div class="t" style="left:171px;width:200px;text-align:center;top:191.1px;font-size:13.5px;color:#111;">Дата</div><div class="t" style="left:318px;width:200px;text-align:center;top:191.1px;font-size:13.5px;color:#111;letter-spacing:0.15px">Сумма выручки, руб.</div><div class="t" style="left:-79.5px;width:200px;text-align:center;top:211.9px;font-size:14px;color:#2a2a2a;">2</div><div class="t" style="left:36px;top:212.1px;font-size:13.5px;color:#111;">Картофель</div><div class="t" style="left:172px;width:200px;text-align:center;top:212.1px;font-size:13.5px;color:#111;letter-spacing:-0.2px">01.05.2016</div><div class="t" style="left:318.5px;width:200px;text-align:center;top:212.1px;font-size:13.5px;color:#111;">10526</div><div class="t" style="left:-79.5px;width:200px;text-align:center;top:232.9px;font-size:14px;color:#2a2a2a;">3</div><div class="t" style="left:36px;top:233.1px;font-size:13.5px;color:#111;">Рыба</div><div class="t" style="left:172px;width:200px;text-align:center;top:233.1px;font-size:13.5px;color:#111;letter-spacing:-0.2px">01.05.2016</div><div class="t" style="left:318.5px;width:200px;text-align:center;top:233.1px;font-size:13.5px;color:#111;">17456</div><div class="t" style="left:-79.5px;width:200px;text-align:center;top:253.9px;font-size:14px;color:#2a2a2a;">4</div><div class="t" style="left:36px;top:254.1px;font-size:13.5px;color:#111;">Мясо</div><div class="t" style="left:172px;width:200px;text-align:center;top:254.1px;font-size:13.5px;color:#111;letter-spacing:-0.2px">01.05.2016</div><div class="t" style="left:318.5px;width:200px;text-align:center;top:254.1px;font-size:13.5px;color:#111;">21563</div><div class="t" style="left:-79.5px;width:200px;text-align:center;top:274.9px;font-size:14px;color:#2a2a2a;">5</div><div class="t" style="left:36px;top:275.1px;font-size:13.5px;color:#111;">Сахар</div><div class="t" style="left:172px;width:200px;text-align:center;top:275.1px;font-size:13.5px;color:#111;letter-spacing:-0.2px">01.05.2016</div><div class="t" style="left:318.5px;width:200px;text-align:center;top:275.1px;font-size:13.5px;color:#111;">8556</div><div class="t" style="left:-79.5px;width:200px;text-align:center;top:295.9px;font-size:14px;color:#2a2a2a;">6</div><div class="t" style="left:36px;top:296.1px;font-size:13.5px;color:#111;">Чай</div><div class="t" style="left:172px;width:200px;text-align:center;top:296.1px;font-size:13.5px;color:#111;letter-spacing:-0.2px">01.05.2016</div><div class="t" style="left:318.5px;width:200px;text-align:center;top:296.1px;font-size:13.5px;color:#111;">4559</div><div class="t" style="left:-79.5px;width:200px;text-align:center;top:316.9px;font-size:14px;color:#2a2a2a;">7</div><div class="t" style="left:36px;top:317.1px;font-size:13.5px;color:#111;">Картофель</div><div class="t" style="left:172px;width:200px;text-align:center;top:317.1px;font-size:13.5px;color:#111;letter-spacing:-0.2px">02.05.2016</div><div class="t" style="left:318.5px;width:200px;text-align:center;top:317.1px;font-size:13.5px;color:#111;">11896</div><div class="t" style="left:-79.5px;width:200px;text-align:center;top:337.9px;font-size:14px;color:#2a2a2a;">8</div><div class="t" style="left:36px;top:338.1px;font-size:13.5px;color:#111;">Рыба</div><div class="t" style="left:172px;width:200px;text-align:center;top:338.1px;font-size:13.5px;color:#111;letter-spacing:-0.2px">02.05.2016</div><div class="t" style="left:318.5px;width:200px;text-align:center;top:338.1px;font-size:13.5px;color:#111;">21546</div><div class="t" style="left:-79.5px;width:200px;text-align:center;top:358.9px;font-size:14px;color:#2a2a2a;">9</div><div class="t" style="left:36px;top:359.1px;font-size:13.5px;color:#111;">Мясо</div><div class="t" style="left:172px;width:200px;text-align:center;top:359.1px;font-size:13.5px;color:#111;letter-spacing:-0.2px">02.05.2016</div><div class="t" style="left:318.5px;width:200px;text-align:center;top:359.1px;font-size:13.5px;color:#111;">10526</div><div class="t" style="left:-79.5px;width:200px;text-align:center;top:379.9px;font-size:14px;color:#2a2a2a;letter-spacing:-0.9px;text-indent:-0.9px">10</div><div class="t" style="left:36px;top:380.1px;font-size:13.5px;color:#111;">Сахар</div><div class="t" style="left:172px;width:200px;text-align:center;top:380.1px;font-size:13.5px;color:#111;letter-spacing:-0.2px">02.05.2016</div><div class="t" style="left:318.5px;width:200px;text-align:center;top:380.1px;font-size:13.5px;color:#111;">7855</div><div class="t" style="left:-79.5px;width:200px;text-align:center;top:400.9px;font-size:14px;color:#2a2a2a;letter-spacing:-0.9px;text-indent:-0.9px">11</div><div class="t" style="left:36px;top:401.1px;font-size:13.5px;color:#111;">Чай</div><div class="t" style="left:172px;width:200px;text-align:center;top:401.1px;font-size:13.5px;color:#111;letter-spacing:-0.2px">02.05.2016</div><div class="t" style="left:318.5px;width:200px;text-align:center;top:401.1px;font-size:13.5px;color:#111;">3296</div><div class="t" style="left:-79.5px;width:200px;text-align:center;top:421.9px;font-size:14px;color:#2a2a2a;letter-spacing:-0.9px;text-indent:-0.9px">12</div><div class="t" style="left:36px;top:422.1px;font-size:13.5px;color:#111;">Картофель</div><div class="t" style="left:172px;width:200px;text-align:center;top:422.1px;font-size:13.5px;color:#111;letter-spacing:-0.2px">03.05.2016</div><div class="t" style="left:318.5px;width:200px;text-align:center;top:422.1px;font-size:13.5px;color:#111;">15456</div><div class="t" style="left:-79.5px;width:200px;text-align:center;top:442.9px;font-size:14px;color:#2a2a2a;letter-spacing:-0.9px;text-indent:-0.9px">13</div><div class="t" style="left:36px;top:443.1px;font-size:13.5px;color:#111;">Рыба</div><div class="t" style="left:172px;width:200px;text-align:center;top:443.1px;font-size:13.5px;color:#111;letter-spacing:-0.2px">03.05.2016</div><div class="t" style="left:318.5px;width:200px;text-align:center;top:443.1px;font-size:13.5px;color:#111;">11496</div><div class="t" style="left:-79.5px;width:200px;text-align:center;top:463.9px;font-size:14px;color:#2a2a2a;letter-spacing:-0.9px;text-indent:-0.9px">14</div><div class="t" style="left:36px;top:464.1px;font-size:13.5px;color:#111;">Мясо</div><div class="t" style="left:172px;width:200px;text-align:center;top:464.1px;font-size:13.5px;color:#111;letter-spacing:-0.2px">03.05.2016</div><div class="t" style="left:318.5px;width:200px;text-align:center;top:464.1px;font-size:13.5px;color:#111;">9568</div><div class="t" style="left:-79.5px;width:200px;text-align:center;top:484.9px;font-size:14px;color:#2a2a2a;letter-spacing:-0.9px;text-indent:-0.9px">15</div><div class="t" style="left:36px;top:485.1px;font-size:13.5px;color:#111;">Сахар</div><div class="t" style="left:172px;width:200px;text-align:center;top:485.1px;font-size:13.5px;color:#111;letter-spacing:-0.2px">03.05.2016</div><div class="t" style="left:318.5px;width:200px;text-align:center;top:485.1px;font-size:13.5px;color:#111;">1234</div><div class="t" style="left:-79.5px;width:200px;text-align:center;top:505.9px;font-size:14px;color:#2a2a2a;letter-spacing:-0.9px;text-indent:-0.9px">16</div><div class="t" style="left:36px;top:506.1px;font-size:13.5px;color:#111;">Чай</div><div class="t" style="left:172px;width:200px;text-align:center;top:506.1px;font-size:13.5px;color:#111;letter-spacing:-0.2px">03.05.2016</div><div class="t" style="left:318.5px;width:200px;text-align:center;top:506.1px;font-size:13.5px;color:#111;">956</div><div class="t" style="left:-79.5px;width:200px;text-align:center;top:526.9px;font-size:14px;color:#2a2a2a;letter-spacing:-0.9px;text-indent:-0.9px">17</div><div class="t" style="left:36px;top:527.1px;font-size:13.5px;color:#111;">Картофель</div><div class="t" style="left:172px;width:200px;text-align:center;top:527.1px;font-size:13.5px;color:#111;letter-spacing:-0.2px">04.05.2016</div><div class="t" style="left:318.5px;width:200px;text-align:center;top:527.1px;font-size:13.5px;color:#111;">14589</div><div class="t" style="left:-79.5px;width:200px;text-align:center;top:547.9px;font-size:14px;color:#2a2a2a;letter-spacing:-0.9px;text-indent:-0.9px">18</div><div class="t" style="left:36px;top:548.1px;font-size:13.5px;color:#111;">Рыба</div><div class="t" style="left:172px;width:200px;text-align:center;top:548.1px;font-size:13.5px;color:#111;letter-spacing:-0.2px">04.05.2016</div><div class="t" style="left:318.5px;width:200px;text-align:center;top:548.1px;font-size:13.5px;color:#111;">10456</div><div class="t" style="left:-79.5px;width:200px;text-align:center;top:568.9px;font-size:14px;color:#2a2a2a;letter-spacing:-0.9px;text-indent:-0.9px">19</div><div class="t" style="left:36px;top:569.1px;font-size:13.5px;color:#111;">Мясо</div><div class="t" style="left:172px;width:200px;text-align:center;top:569.1px;font-size:13.5px;color:#111;letter-spacing:-0.2px">04.05.2016</div><div class="t" style="left:318.5px;width:200px;text-align:center;top:569.1px;font-size:13.5px;color:#111;">15461</div><div class="t" style="left:-79.5px;width:200px;text-align:center;top:589.9px;font-size:14px;color:#2a2a2a;letter-spacing:-0.9px;text-indent:-0.9px">20</div><div class="t" style="left:36px;top:590.1px;font-size:13.5px;color:#111;">Сахар</div><div class="t" style="left:172px;width:200px;text-align:center;top:590.1px;font-size:13.5px;color:#111;letter-spacing:-0.2px">04.05.2016</div><div class="t" style="left:318.5px;width:200px;text-align:center;top:590.1px;font-size:13.5px;color:#111;">3256</div><svg style="position:absolute;left:0px;top:0px;pointer-events:none;z-index:5" width="886" height="649" viewBox="0 0 886 649"><polygon points="198.2,173.2 221.2,173.2 221.2,169.2 245.8,177.5 221.2,185.8 221.2,181.8 198.2,181.8" fill="none" stroke="#ed1c24" stroke-width="4.5" stroke-linejoin="round"/><polygon points="342.2,170.2 365.2,170.2 365.2,166.2 388.8,175.0 365.2,183.8 365.2,179.8 342.2,179.8" fill="none" stroke="#ed1c24" stroke-width="4.5" stroke-linejoin="round"/></svg><svg style="position:absolute;left:494px;top:160px;z-index:5" width="70" height="35" viewBox="494 160 70 35"><polygon points="494.0,174.5 523.5,174.5 523.5,170.5 551.5,178.0 523.5,185.5 523.5,181.5 494.0,181.5" fill="none" stroke="#ed1c24" stroke-width="5" stroke-linejoin="round"/></svg><div style="left:862px;top:167px;width:16px;height:437px;background:linear-gradient(90deg,#e3e6ea,#eef0f3)"></div><div style="left:862px;top:167px;width:16px;height:8px;background:#dfe3e8"></div><div style="left:863px;top:168px;width:14px;height:7px;background:#fff;border:1px solid #868c93"></div><div style="left:866px;top:171px;width:8px;height:1px;background:#6a7078"></div><svg style="position:absolute;left:864px;top:179px;" width="12" height="8" viewBox="0 0 12 8"><path d="M1 7L6 1L11 7Z" fill="#3f444a"/></svg><div style="left:863px;top:192px;width:14px;height:178px;background:linear-gradient(90deg,#f6f7f9,#e6e9ed 60%,#dcdfe4);border:1px solid #989ea6;border-radius:2px"></div><div style="left:866px;top:277px;width:8px;height:1px;background:#6f747a"></div><div style="left:866px;top:279px;width:8px;height:1px;background:#6f747a"></div><div style="left:866px;top:281px;width:8px;height:1px;background:#6f747a"></div><div style="left:866px;top:283px;width:8px;height:1px;background:#6f747a"></div><svg style="position:absolute;left:864px;top:590px;" width="12" height="8" viewBox="0 0 12 8"><path d="M1 1L6 7L11 1Z" fill="#3f444a"/></svg><div style="left:8px;top:603px;width:870px;height:15px;background:#dfe3e8"></div><div style="left:8px;top:603px;width:513px;height:1px;background:#a9afb6"></div><div style="left:8px;top:604px;width:513px;height:1px;background:#fbfcfd"></div><div style="left:8px;top:617px;width:513px;height:1px;background:#fbfcfd"></div><svg style="position:absolute;left:12px;top:606px;" width="58" height="10" viewBox="0 0 58 10"><rect x="2" y="1" width="1.5" height="8" fill="#444"/><path d="M9 1V9L4 5Z" fill="#444"/>
<path d="M23 1V9L18 5Z" fill="#444"/><path d="M32 1V9L37 5Z" fill="#444"/>
<path d="M46 1V9L51 5Z" fill="#444"/><rect x="52" y="1" width="1.5" height="8" fill="#444"/></svg><svg style="position:absolute;left:0px;top:603px;" width="886" height="16" viewBox="0 0 886 16"><rect x="71" y="0" width="55" height="15" fill="#ffffff"/><path d="M121 15L133 1" stroke="#8f969f" fill="none"/><path d="M119 15H124L122 12Z" fill="#aab0b8"/><path d="M174 15L186 1" stroke="#8f969f" fill="none"/><path d="M172 15H177L175 12Z" fill="#aab0b8"/><path d="M227 15L239 1" stroke="#8f969f" fill="none"/><path d="M225 15H230L228 12Z" fill="#aab0b8"/><path d="M259 15L271 1" stroke="#8f969f" fill="none"/><path d="M70.5 0V14.5H520" stroke="#8f969f" fill="none"/></svg><div class="t" style="left:-2px;width:200px;text-align:center;top:605.1px;font-size:12.3px;color:#3a3a3a;font-weight:bold">Лист1</div><div class="t" style="left:50.5px;width:200px;text-align:center;top:605.3px;font-size:12px;color:#4a4a55;">Лист2</div><div class="t" style="left:103.5px;width:200px;text-align:center;top:605.3px;font-size:12px;color:#4a4a55;">Лист3</div><svg style="position:absolute;left:242px;top:605px;" width="15" height="12" viewBox="0 0 15 12"><rect x="2.5" y="3.5" width="11" height="8" rx="1" fill="#e6eef9" stroke="#5a78a8"/><path d="M4 1L5 4L2 3L5 5L3 8L6 6L7 8L7 5L9 4H6Z" fill="#f2a830"/></svg><div style="left:521px;top:603px;width:341px;height:15px;background:#dfe3e8"></div><div style="left:520px;top:604px;width:8px;height:14px;background:#fff;border:1px solid #8a9097"></div><div style="left:523px;top:607px;width:1px;height:8px;background:#777"></div><svg style="position:absolute;left:530px;top:606px;" width="10" height="11" viewBox="0 0 10 11"><path d="M8 1V10L3 5.5Z" fill="#3f444a"/></svg><div style="left:546px;top:604px;width:254px;height:14px;background:linear-gradient(#f6f7f9,#e5e8ec 60%,#d9dde2);border:1px solid #9aa0a7;border-radius:2px"></div><div style="left:669px;top:608px;width:1px;height:7px;background:#6f747a"></div><div style="left:671px;top:608px;width:1px;height:7px;background:#6f747a"></div><div style="left:673px;top:608px;width:1px;height:7px;background:#6f747a"></div><div style="left:675px;top:608px;width:1px;height:7px;background:#6f747a"></div><svg style="position:absolute;left:841px;top:606px;" width="10" height="11" viewBox="0 0 10 11"><path d="M2 1V10L7 5.5Z" fill="#3f444a"/></svg><div style="left:854px;top:604px;width:8px;height:14px;background:#fff;border:1px solid #8a9097"></div><div style="left:857px;top:607px;width:1px;height:8px;background:#777"></div><div style="left:862px;top:604px;width:16px;height:14px;background:#dfe3e8"></div><div style="left:8px;top:618px;width:870px;height:2px;background:#8d939a"></div><div style="left:8px;top:620px;width:870px;height:1px;background:#fbfcfd"></div><div style="left:8px;top:621px;width:870px;height:20px;background:linear-gradient(#e9ebee 0%,#dfe1e5 45%,#d3d6da 60%,#c9ccd1 100%)"></div><div class="t" style="left:-66px;width:200px;text-align:center;top:623.9px;font-size:11.7px;color:#3d3d4d;">Готово</div><div style="left:62px;top:622px;width:1px;height:17px;background:#c8ced6"></div><div style="left:63px;top:622px;width:1px;height:17px;background:#fff"></div><svg style="position:absolute;left:72px;top:622px;" width="16" height="15" viewBox="0 0 16 15"><rect x="1.5" y="3.5" width="13" height="10" fill="#fff" stroke="#4a6cae"/><rect x="2" y="4" width="12" height="2" fill="#4a7bd0"/><path d="M4 8H13M4 10H13M4 12H13" stroke="#6a8cc8"/><circle cx="4" cy="3.5" r="3" fill="#e03a20"/></svg><div style="left:97px;top:622px;width:1px;height:17px;background:#c8ced6"></div><div style="left:98px;top:622px;width:1px;height:17px;background:#fff"></div><div class="t" style="left:303px;top:624.8px;font-size:10.9px;color:#3d3d4d;">Среднее: 25941,7625</div><div class="t" style="left:427px;top:624.8px;font-size:10.9px;color:#3d3d4d;">Количество: 123</div><div class="t" style="left:530px;top:624.9px;font-size:10.7px;color:#3d3d4d;">Сумма: 2075341</div><div style="left:621px;top:622px;width:1px;height:17px;background:#c8ced6"></div><div style="left:622px;top:622px;width:1px;height:17px;background:#fff"></div><div style="left:626px;top:621px;width:19px;height:18px;background:linear-gradient(#fde9a8,#fbd46a);border:1px solid #e2b24a;border-radius:2px"></div><svg style="position:absolute;left:629px;top:624px;" width="14" height="12" viewBox="0 0 14 12"><rect x="0" y="0" width="14" height="12" fill="#4d4f53"/><g fill="#fff"><rect x="1" y="1" width="3.5" height="2.5"/><rect x="5.5" y="1" width="3.5" height="2.5"/><rect x="10" y="1" width="3" height="2.5"/><rect x="1" y="4.5" width="3.5" height="2.5"/><rect x="5.5" y="4.5" width="3.5" height="2.5"/><rect x="10" y="4.5" width="3" height="2.5"/><rect x="1" y="8" width="3.5" height="3"/><rect x="5.5" y="8" width="3.5" height="3"/><rect x="10" y="8" width="3" height="3"/></g></svg><svg style="position:absolute;left:647px;top:623px;" width="15" height="14" viewBox="0 0 15 14"><rect x="0.5" y="0.5" width="14" height="13" fill="#9ea3a9" stroke="#5d6167"/><rect x="4" y="2.5" width="7" height="9" fill="#fff" stroke="#777"/><path d="M5.5 5H9.5M5.5 7H9.5M5.5 9H9.5" stroke="#999"/></svg><svg style="position:absolute;left:665px;top:623px;" width="15" height="14" viewBox="0 0 15 14"><rect x="0.5" y="0.5" width="14" height="13" fill="#a6abb1" stroke="#5d6167"/><rect x="2.5" y="1.5" width="3.5" height="7" fill="#fff" stroke="#666" stroke-width=".6"/><rect x="7.5" y="1.5" width="3.5" height="7" fill="#fff" stroke="#666" stroke-width=".6"/></svg><div class="t" style="left:605px;width:200px;text-align:center;top:624.9px;font-size:11.3px;color:#3d3d4d;">100%</div><svg style="position:absolute;left:726px;top:621px;" width="20" height="19" viewBox="0 0 20 19"><circle cx="9.5" cy="9.5" r="8" fill="#f4f5f7" stroke="#7b8088"/><rect x="5" y="8.5" width="9" height="2" fill="#333"/></svg><div style="left:745px;top:629px;width:97px;height:1px;background:#9a9fa6"></div><div style="left:745px;top:630px;width:97px;height:1px;background:#f6f7f9"></div><svg style="position:absolute;left:787px;top:622px;" width="12" height="15" viewBox="0 0 12 15"><path d="M1.5 1.5H10.5V9L6 13.5L1.5 9Z" fill="#fbfbfc" stroke="#6f757d"/></svg><svg style="position:absolute;left:842px;top:621px;" width="20" height="19" viewBox="0 0 20 19"><circle cx="9.5" cy="9.5" r="8" fill="#f4f5f7" stroke="#7b8088"/><rect x="5" y="8.5" width="9" height="2" fill="#333"/><rect x="8.5" y="5" width="2" height="9" fill="#333"/></svg><svg style="position:absolute;left:866px;top:628px;" width="12" height="12" viewBox="0 0 12 12"><g fill="#9aa2ad"><rect x="9" y="1" width="2" height="2"/><rect x="6" y="4" width="2" height="2"/><rect x="9" y="4" width="2" height="2"/><rect x="3" y="7" width="2" height="2"/><rect x="6" y="7" width="2" height="2"/><rect x="9" y="7" width="2" height="2"/></g></svg></body></html>
